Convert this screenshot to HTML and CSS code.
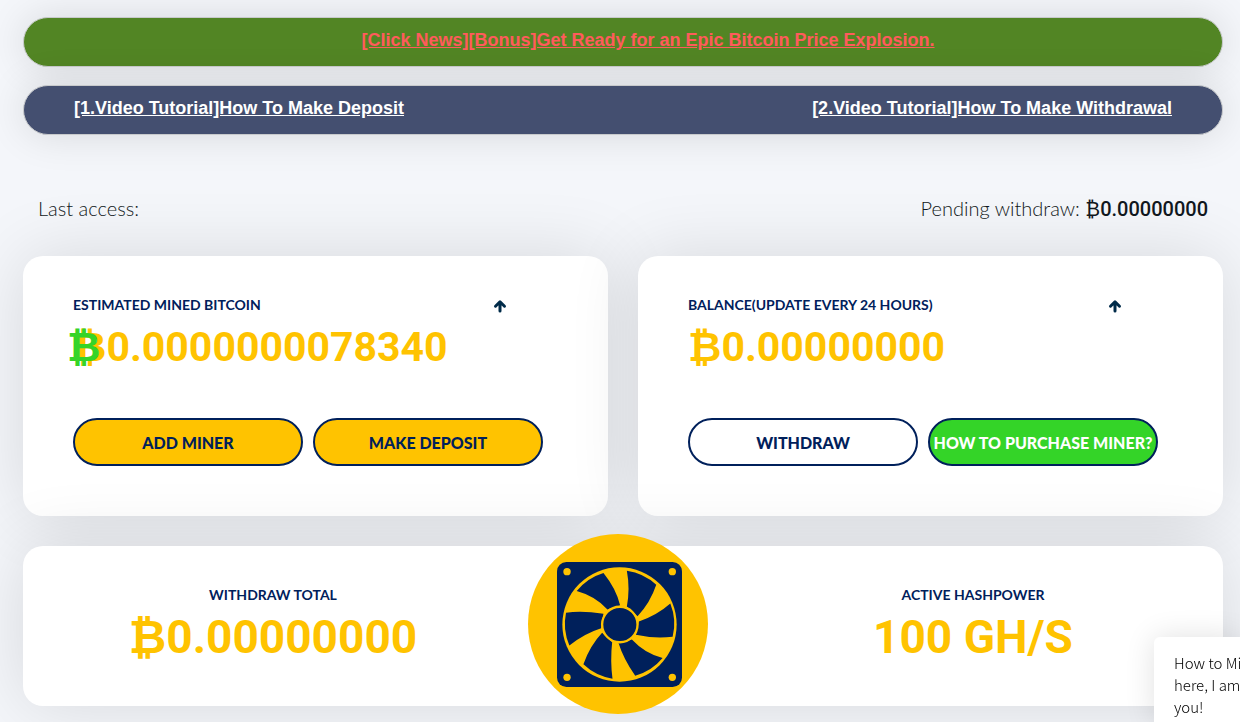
FILE: index.html
```
<!doctype html>
<html lang="en">
<head>
    <meta charset="utf-8">
    <title>Mining Dashboard</title>
    <link rel="stylesheet" href="styles.css">
</head>

<body>
    <main class="dashboard">
        <div class="notice notice-news">
            <a href="#news">[Click News][Bonus]Get Ready for an Epic Bitcoin Price Explosion.</a>
        </div>
        <div class="notice notice-tutorials">
            <a href="#deposit-video">[1.Video Tutorial]How To Make Deposit</a>
            <a href="#withdraw-video">[2.Video Tutorial]How To Make Withdrawal</a>
        </div>

        <div class="status-row">
            <span>Last access:</span>
            <span>Pending withdraw: <b class="pending-amount">₿0.00000000</b></span>
        </div>

        <div class="cards">
            <section class="card">
                <div class="card-header">
                    <h2>ESTIMATED MINED BITCOIN</h2>
                    <svg class="arrow" viewBox="0 0 14 14"><path d="M7 12V3.5M2.5 7.2 7 2.8l4.5 4.4"/></svg>
                </div>
                <p class="amount"><span class="coin">₿</span>₿0.0000000078340</p>
                <div class="actions">
                    <button type="button" class="btn">ADD MINER</button>
                    <button type="button" class="btn">MAKE DEPOSIT</button>
                </div>
            </section>

            <section class="card">
                <div class="card-header">
                    <h2>BALANCE(UPDATE EVERY 24 HOURS)</h2>
                    <svg class="arrow" viewBox="0 0 14 14"><path d="M7 12V3.5M2.5 7.2 7 2.8l4.5 4.4"/></svg>
                </div>
                <p class="amount">₿0.00000000</p>
                <div class="actions">
                    <button type="button" class="btn btn-plain">WITHDRAW</button>
                    <button type="button" class="btn btn-green">HOW TO PURCHASE MINER?</button>
                </div>
            </section>
        </div>

        <section class="summary">
            <div class="total">
                <h2>WITHDRAW TOTAL</h2>
                <p class="amount amount-big">₿0.00000000</p>
            </div>
            <div class="total">
                <h2>ACTIVE HASHPOWER</h2>
                <p class="amount amount-big">100 GH/S</p>
            </div>
            <div class="fan">
                <svg viewBox="111 110 374 374">
                    <rect x="111" y="110" width="374" height="374" rx="28" fill="#00205b"/>
                    <g fill="#ffc300">
                        <circle cx="141" cy="139" r="11"/>
                        <circle cx="456" cy="139" r="11"/>
                        <circle cx="141" cy="455" r="11"/>
                        <circle cx="456" cy="455" r="11"/>
                        <circle cx="298" cy="297" r="171"/>
                    </g>
                    <!-- blades -->
                    <g fill="#00205b">
                        <path d="M250 143Q288 190 300 240L262 252Q225 212 170 197A163 163 0 0 1 250 143Z"/>
                        <path d="M320 136Q330 190 320 243L352 272Q390 232 408 178A163 163 0 0 0 320 136Z"/>
                        <path d="M450 234Q412 268 356 288L347 328Q400 340 457 334A163 163 0 0 0 450 234Z"/>
                        <path d="M427 397Q375 385 335 342L295 352Q310 400 345 450A163 163 0 0 0 427 397Z"/>
                        <path d="M277 459Q270 405 276 350L246 322Q210 360 190 416A163 163 0 0 0 277 459Z"/>
                        <path d="M148 360Q190 325 243 308L250 265Q185 255 138 262A163 163 0 0 0 148 360Z"/>
                    </g>
                    <circle cx="299" cy="297" r="53" fill="#00205b" stroke="#ffc300" stroke-width="7"/>
                </svg>
            </div>
        </section>
    </main>

    <aside class="chat-popup">
        How to Mi<br>
        here, I am<br>
        you!
    </aside>
</body>
</html>
```
FILE: styles.css
```
* {
    box-sizing: border-box;
}

body {
    margin: 0;
    background-color: #f4f6fa;
    color: #111820;
    font-family: Lato, "Open Sans", sans-serif;
    overflow: hidden;
}

h2, p {
    margin: 0;
}

.dashboard {
    padding: 17px 17px 16px 23px;
}

.notice {
    display: flex;
    height: 50px;
    padding: 0 50px;
    margin-bottom: 18px;
    border: 1px solid #c8cacc;
    border-radius: 25px;
    box-shadow: 0 0 40px rgba(0, 0, 0, 0.12);
    font-family: "Liberation Sans", Arial, sans-serif;
    font-size: 18px;
    font-weight: bold;
    line-height: 44px;
}

.notice-news {
    justify-content: center;
    padding-right: 0;
    background-color: #528524;
}
.notice-news a { color: #ff5b5b; }

.notice-tutorials {
    justify-content: space-between;
    background-color: #444f70;
}
.notice-tutorials a { color: white; }

.status-row {
    display: flex;
    justify-content: space-between;
    margin-top: 58px;
    padding: 0 15px;
    font-size: 20px;
    font-weight: 300;
    line-height: 30px;
}

.pending-amount {
    font-family: Roboto, sans-serif;
    font-weight: 500;
}

.cards {
    display: grid;
    grid-template-columns: 1fr 1fr;
    gap: 30px;
    margin-top: 32px;
}

.card {
    padding: 34px 65px 50px 50px;
    border-radius: 20px;
    background-color: white;
    box-shadow: 0 0 70px rgba(0, 0, 0, 0.12);
}

.card-header {
    display: flex;
    justify-content: space-between;
    height: 30px;
    padding-right: 36px;
}

h2 {
    color: #00205b;
    font-size: 14px;
    font-weight: 700;
    line-height: 30px;
}

.arrow {
    width: 14px;
    height: 14px;
    margin-top: 9px;
    fill: none;
    stroke: #002b49;
    stroke-width: 3;
    stroke-linecap: round;
    stroke-linejoin: round;
}

.amount {
    position: relative;
    color: #ffc300;
    font-family: Roboto, sans-serif;
    font-size: 41px;
    font-weight: 700;
    line-height: 54px;
    white-space: nowrap;
}

/* green coin lies over the first sign */
.coin {
    position: absolute;
    left: -6px;
    color: #34d428;
}

.actions {
    display: grid;
    grid-template-columns: 1fr 1fr;
    gap: 10px;
    margin-top: 44px;
}

.btn {
    height: 48px;
    padding: 0;
    border: 2px solid #00205b;
    border-radius: 24px;
    background-color: #ffc300;
    color: #00205b;
    font-family: inherit;
    font-size: 16px;
    font-weight: 900;
    white-space: nowrap;
    cursor: pointer;
}
.btn-plain { background-color: white; }
.btn-green {
    background-color: #34d428;
    color: white;
}

.summary {
    position: relative;
    display: grid;
    grid-template-columns: 1fr 1fr;
    column-gap: 200px;
    margin-top: 30px;
    padding: 34px 0 42px;
    border-radius: 20px;
    background-color: white;
    box-shadow: 0 0 70px rgba(0, 0, 0, 0.12);
}

.total {
    text-align: center;
}

.amount-big {
    font-size: 46px;
}

.fan {
    position: absolute;
    top: -12px;
    left: calc(50% - 95px);
    display: flex;
    justify-content: center;
    align-items: center;
    width: 180px;
    height: 180px;
    padding-left: 2px;
    border-radius: 50%;
    background-color: #ffc300;
}
.fan svg {
    width: 125px;
    height: 125px;
}

.chat-popup {
    position: fixed;
    right: 0;
    bottom: 0;
    width: 86px;
    height: 85px;
    padding: 15px 0 0 20px;
    border-radius: 6px 0 0 0;
    background-color: white;
    box-shadow: 0 0 30px rgba(0, 0, 0, 0.12);
    color: #000;
    font-family: "Noto Sans CJK SC", sans-serif;
    font-size: 15px;
    font-weight: 300;
    line-height: 22px;
    white-space: nowrap;
}
```
